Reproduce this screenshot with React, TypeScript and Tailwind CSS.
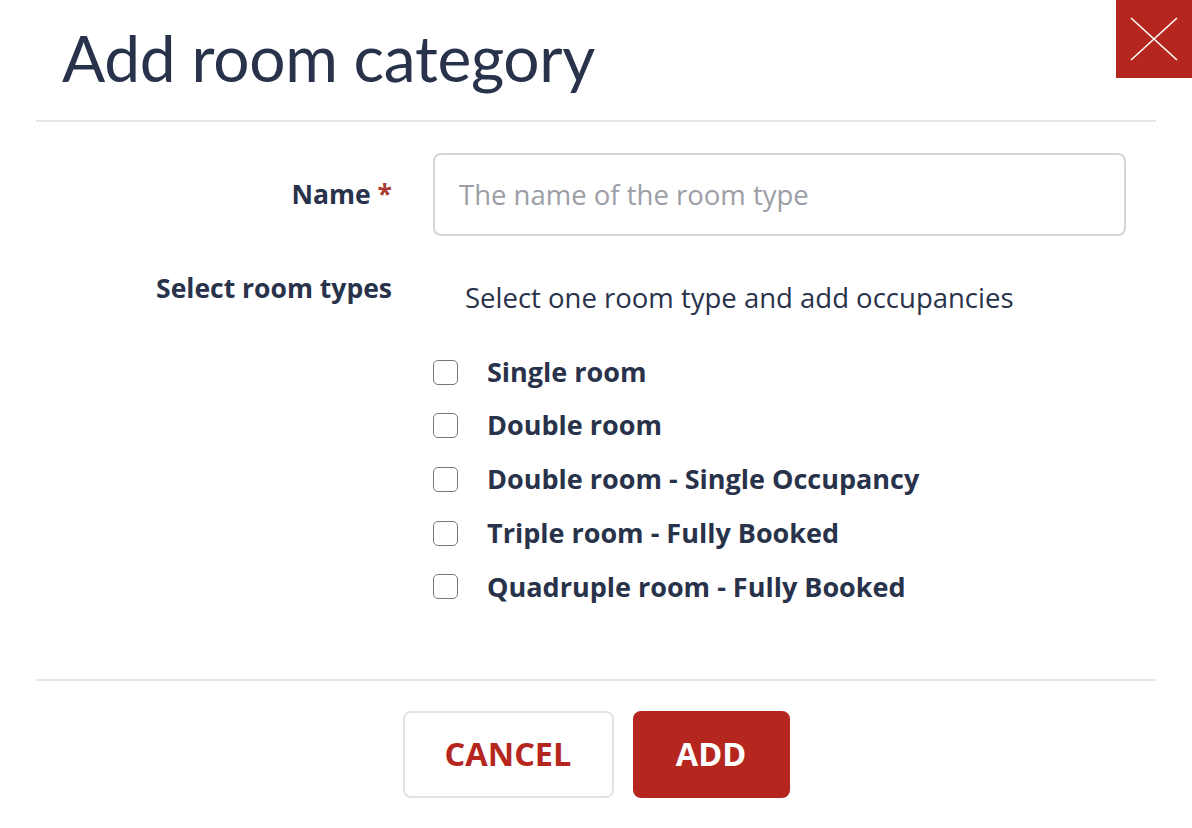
import React from "react";

const roomTypes = [
  "Single room",
  "Double room",
  "Double room - Single Occupancy",
  "Triple room - Fully Booked",
  "Quadruple room - Fully Booked",
];

export default function App() {
  return (
    <div
      className="relative h-[828px] w-[1192px] bg-white text-[#28324a]"
      style={{ fontFamily: "'Open Sans', 'Noto Sans', sans-serif" }}
    >
      {/* Close */}
      <button className="absolute right-0 top-0 flex h-[78px] w-[76px] items-center justify-center bg-[#b5261e]">
        <svg width="48" height="44" viewBox="0 0 48 44" fill="none">
          <path d="M1 1 L47 43 M47 1 L1 43" stroke="white" strokeWidth="1.6" />
        </svg>
      </button>

      {/* Header */}
      <div className="mx-9 border-b-2 border-[#e6e6e6] pb-[22px] pl-[26px] pt-[18px]">
        <h1
          className="text-[64px] font-normal leading-[80px] tracking-[-0.3px]"
          style={{ fontFamily: "Lato, 'Open Sans', sans-serif" }}
        >
          Add room category
        </h1>
      </div>

      {/* Body */}
      <div className="mx-9 flex h-[557px] flex-col pr-[30px] pt-[31px]">
        <div className="flex items-center gap-[41px]">
          <label className="w-[356px] text-right text-[26.5px] font-bold">
            Name <span className="text-[#a83a32]">*</span>
          </label>
          <input
            type="text"
            placeholder="The name of the room type"
            className="h-[83px] flex-1 rounded-[8px] border-2 border-[#d4d4d4] px-[24px] text-[27.5px] outline-none placeholder:text-[#9b9ea5]"
          />
        </div>

        <div className="mt-[34px] flex gap-[41px]">
          <div className="w-[356px] text-right text-[26.5px] font-bold leading-[36px]">
            Select room types
          </div>
          <div className="flex flex-1 flex-col">
            <p className="mt-[10px] pl-[32px] text-[27.5px] leading-[36px]">
              Select one room type and add occupancies
            </p>
            <div className="mt-[38px] flex flex-col gap-[17.7px]">
              {roomTypes.map((t) => (
                <label key={t} className="flex h-[36px] items-center gap-[29px]">
                  <span className="h-[25px] w-[25px] shrink-0 rounded-[5px] border-[1.5px] border-[#777777] bg-white" />
                  <span className="text-[27px] font-bold">{t}</span>
                </label>
              ))}
            </div>
          </div>
        </div>
      </div>

      {/* Footer */}
      <div className="mx-9 flex justify-center gap-[19px] border-t-2 border-[#e6e6e6] pt-[30px]">
        <button className="h-[87px] w-[211px] rounded-[8px] border-2 border-[#e3e3e3] bg-white text-[32.5px] font-bold text-[#b5261e]">
          CANCEL
        </button>
        <button className="h-[87px] w-[157px] rounded-[8px] bg-[#b5261e] text-[32.5px] font-bold text-white">
          ADD
        </button>
      </div>
    </div>
  );
}
